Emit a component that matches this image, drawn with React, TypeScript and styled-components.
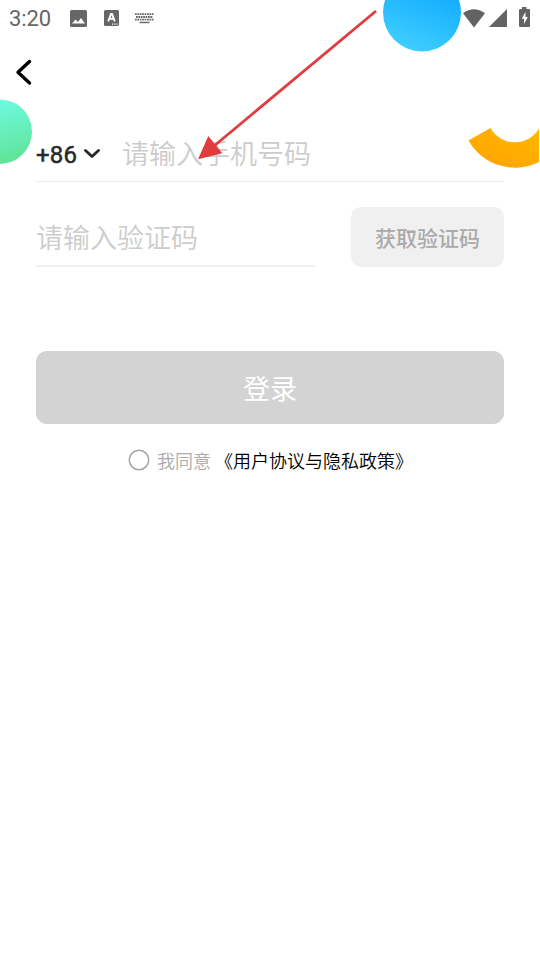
import React from "react";
import styled, { createGlobalStyle } from "styled-components";

const GlobalStyle = createGlobalStyle`
  * { box-sizing: border-box; }
  body { margin: 0; background: #fff; }
`;

const Screen = styled.div`
  position: relative;
  display: flex;
  flex-direction: column;
  width: 540px;
  height: 960px;
  overflow: hidden;
  background: #fff;
  font-family: Roboto, "Noto Sans CJK SC", sans-serif;
`;

const Decoration = styled.svg`
  position: absolute;
  inset: 0;
  pointer-events: none;
`;

const StatusBar = styled.header`
  position: relative;
  display: flex;
  align-items: center;
  justify-content: space-between;
  height: 36px;
  padding: 0 9px;
`;

const StatusGroup = styled.div`
  display: flex;
  align-items: center;
  height: 36px;
`;

const Clock = styled.span`
  width: 60px;
  padding-top: 1px;
  font-size: 22px;
  line-height: 37px;
  letter-spacing: -0.1px;
  color: #666;
`;

const Glyph = styled.svg<{ $gap?: number }>`
  display: block;
  flex: none;
  margin-left: ${({ $gap = 0 }) => $gap}px;
`;

const NavBar = styled.nav`
  position: relative;
  display: flex;
  align-items: center;
  height: 72px;
  padding-left: 15px;
`;

const IconButton = styled.button`
  display: flex;
  padding: 0;
  border: 0;
  background: none;
`;

const Form = styled.main`
  position: relative;
  display: flex;
  flex-direction: column;
  padding: 0 36px;
`;

const PhoneRow = styled.div`
  display: flex;
  height: 74px;
  padding-top: 18px;
  border-bottom: 1px solid #ececec;
`;

const CountryCode = styled.button`
  display: flex;
  align-items: center;
  width: 86px;
  height: 55px;
  padding: 0;
  border: 0;
  background: none;
  color: #292929;
`;

const DialCode = styled.span`
  width: 42px;
  padding-top: 4px;
  font: 400 24px/55px Roboto, sans-serif;
  letter-spacing: 0.2px;
  -webkit-text-stroke: 0.5px #292929;
  text-align: left;
`;

const Placeholder = styled.span`
  font: 350 27px/54px "Noto Sans CJK SC", sans-serif;
  color: #ccc;
  white-space: nowrap;
`;

const CodeRow = styled.div`
  display: flex;
  justify-content: space-between;
  margin-top: 25px;
`;

const CodeField = styled.div`
  width: 279px;
  height: 60px;
  padding-top: 3px;
  border-bottom: 2px solid #f0f0f0;
`;

const SendCode = styled.button`
  width: 153px;
  height: 60px;
  padding: 0;
  border: 0;
  border-radius: 10px;
  background: #f0f0f0;
  font: 500 21px/60px "Noto Sans CJK SC", sans-serif;
  color: #aaa;
`;

const Login = styled.button`
  height: 73px;
  margin-top: 84px;
  padding: 0;
  border: 0;
  border-radius: 11px;
  background: #d3d3d3;
  font: 400 27px/73px "Noto Sans CJK SC", sans-serif;
  color: #fff;
`;

const Agreement = styled.div`
  display: flex;
  align-items: center;
  height: 36px;
  margin-top: 18px;
  padding-left: 92px;
  font: 350 18px/36px "Noto Sans CJK SC", sans-serif;
  white-space: nowrap;
`;

const Radio = styled.svg`
  display: block;
  flex: none;
  margin: 0 7px 1px 0;
`;

const AgreeText = styled.span`
  color: #aaa;
`;

const Policy = styled.a`
  margin-left: 4px;
  color: #000;
`;

function Backdrop() {
  return (
    <Decoration width="540" height="960" viewBox="0 0 540 960">
      <defs>
        <linearGradient id="blue" x1=".65" y1=".15" x2=".3" y2="1">
          <stop offset="0" stopColor="#12aaff" />
          <stop offset="1" stopColor="#41d0ff" />
        </linearGradient>
        <linearGradient id="green" x1=".4" y1="0" x2=".65" y2="1">
          <stop offset="0" stopColor="#6ffbe3" />
          <stop offset="1" stopColor="#60e394" />
        </linearGradient>
        <linearGradient id="orange" x1="1" y1="0" x2=".3" y2="1">
          <stop offset="0" stopColor="#ffb800" />
          <stop offset="1" stopColor="#ffa400" />
        </linearGradient>
      </defs>
      <circle cx="422" cy="12.5" r="39" fill="url(#blue)" />
      <circle cx="-.3" cy="131.7" r="32.3" fill="url(#green)" />
      <path d="M468.500 140.500A53.500 53.500 0 0 0 539 162V128.600A28 28 0 0 1 490.500 128Z" fill="url(#orange)" />
    </Decoration>
  );
}

function Pointer() {
  return (
    <Decoration width="540" height="960" viewBox="0 0 540 960">
      <path d="M376 11L214 146" stroke="#e13b3d" strokeWidth="2.800" />
      <path d="M198 159.300L208.300 136L222.300 153.200Z" fill="#e13b3d" />
    </Decoration>
  );
}

export default function App() {
  return (
    <Screen>
      <GlobalStyle />
      <Backdrop />
      <StatusBar>
        <StatusGroup>
          <Clock>3:20</Clock>
          <Glyph $gap={1} width="17" height="17" viewBox="0 0 17 17">
            <path fill="#666" fillRule="evenodd" d="M1.500 0h14Q17 0 17 1.500v14q0 1.500-1.500 1.500h-14Q0 17 0 15.500v-14Q0 0 1.500 0ZM2 13.500h13l-4-5.500-3 4-2.500-2.500Z" />
          </Glyph>
          <Glyph $gap={17} width="15" height="16" viewBox="0 0 15 16">
            <rect width="15" height="16" rx="1.500" fill="#666" />
            <path d="M4.200 11.300L7 4h1l2.800 7.300M5.300 8.800h4.400" fill="none" stroke="#fff" strokeWidth="1.900" />
            <path d="M8 14.200h1.200m1 0h1.200m1 0h1.200" stroke="#fff" strokeWidth="1.200" />
          </Glyph>
          <Glyph $gap={16} width="19" height="11" viewBox="0 0 19 11">
            <path d="M0 1.200h19M1 4h17M0 6.700h19" stroke="#666" strokeWidth="1.800" strokeDasharray="1.700 .7" />
            <path d="M4.500 9.500h10" stroke="#666" strokeWidth="1.400" />
          </Glyph>
        </StatusGroup>
        <StatusGroup>
          <Glyph width="22" height="19" viewBox="0 0 22 19">
            <path d="M0 4.200Q11-3.600 22 4.200L11 18.500Z" fill="#636363" />
          </Glyph>
          <Glyph $gap={4} width="18" height="18" viewBox="0 0 18 18">
            <path d="M18 0v18H0Z" fill="#636363" />
          </Glyph>
          <Glyph $gap={11} width="13" height="22" viewBox="0 0 13 22">
            <path d="M4 0h4.500v2H11q1 0 1 1V19q0 1-1 1H2q-1 0-1-1V3q0-1 1-1h2Z" fill="#636363" />
            <path d="M7.500 5L3.700 11.800h2.300V17l3.800-7H7.500Z" fill="#fff" />
          </Glyph>
        </StatusGroup>
      </StatusBar>
      <NavBar>
        <IconButton aria-label="返回">
          <Glyph width="18" height="28" viewBox="0 0 18 28">
            <path d="M14.500 3.500L3 14.300L14.500 25" fill="none" stroke="#000" strokeWidth="3.400" strokeLinecap="round" strokeLinejoin="round" />
          </Glyph>
        </IconButton>
      </NavBar>
      <Form>
        <PhoneRow>
          <CountryCode>
            <DialCode>+86</DialCode>
            <Glyph $gap={5} width="18" height="14" viewBox="0 0 18 14">
              <path d="M2.500 3.500L9 9.500L15.500 3.500" fill="none" stroke="#292929" strokeWidth="2.900" strokeLinecap="round" strokeLinejoin="round" />
            </Glyph>
          </CountryCode>
          <Placeholder>请输入手机号码</Placeholder>
        </PhoneRow>
        <CodeRow>
          <CodeField>
            <Placeholder>请输入验证码</Placeholder>
          </CodeField>
          <SendCode>获取验证码</SendCode>
        </CodeRow>
        <Login>登录</Login>
        <Agreement>
          <Radio width="22" height="22" viewBox="0 0 22 22">
            <circle cx="11" cy="11" r="9.700" fill="none" stroke="#a5a5a5" strokeWidth="1.500" />
          </Radio>
          <AgreeText>我同意</AgreeText>
          <Policy>《用户协议与隐私政策》</Policy>
        </Agreement>
      </Form>
      <Pointer />
    </Screen>
  );
}
